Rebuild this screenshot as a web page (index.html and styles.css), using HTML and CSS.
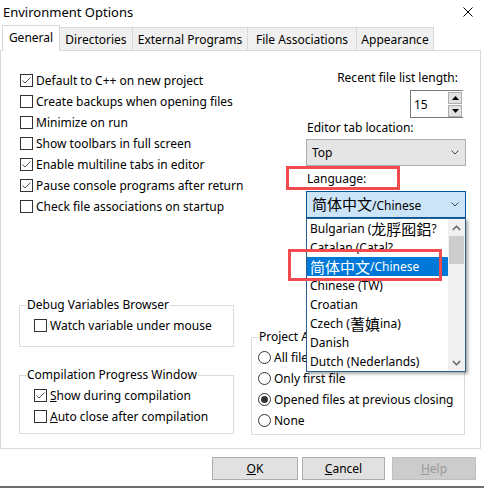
FILE: index.html
```html
<!DOCTYPE html>
<html>
<head>
<meta charset="utf-8">
<link rel="stylesheet" href="styles.css">
</head>
<body>
<div class="titlebar">
  <span class="title">Environment Options</span>
  <svg class="close" width="10" height="10" viewBox="0 0 10 10"><path d="M0.5 0.5 L9.5 9.5 M9.5 0.5 L0.5 9.5" stroke="#000" stroke-width="1" fill="none"/></svg>
</div>
<div class="tabs">
  <div class="tab active t-gen">General</div>
  <div class="tab t-dir">Directories</div>
  <div class="tab t-ext">External Programs</div>
  <div class="tab t-fa">File Associations</div>
  <div class="tab t-app">Appearance</div>
</div>
<div class="panel">
  <div class="top">
    <div class="checks">
      <div class="row"><span class="cb"><svg width="11" height="11" viewBox="0 0 11 11"><polyline points="1.5,5.5 4,8 9.5,2.5" fill="none" stroke="#555" stroke-width="1"/></svg></span>Default to C++ on new project</div>
      <div class="row"><span class="cb"></span>Create backups when opening files</div>
      <div class="row"><span class="cb"></span>Minimize on run</div>
      <div class="row"><span class="cb"></span>Show toolbars in full screen</div>
      <div class="row"><span class="cb"><svg width="11" height="11" viewBox="0 0 11 11"><polyline points="1.5,5.5 4,8 9.5,2.5" fill="none" stroke="#555" stroke-width="1"/></svg></span>Enable multiline tabs in editor</div>
      <div class="row"><span class="cb"><svg width="11" height="11" viewBox="0 0 11 11"><polyline points="1.5,5.5 4,8 9.5,2.5" fill="none" stroke="#555" stroke-width="1"/></svg></span>Pause console programs after return</div>
      <div class="row"><span class="cb"></span>Check file associations on startup</div>
    </div>
    <div class="right">
      <div class="lbl-r">Recent file list length:</div>
      <div class="spin">
        <span class="spin-val">15</span>
        <span class="spin-btns">
          <span class="sb"><svg width="7" height="4" viewBox="0 0 7 4"><polygon points="0,4 7,4 3.5,0" fill="#000"/></svg></span>
          <span class="sb"><svg width="7" height="4" viewBox="0 0 7 4"><polygon points="0,0 7,0 3.5,4" fill="#000"/></svg></span>
        </span>
      </div>
      <div class="lbl lbl-tab">Editor tab location:</div>
      <div class="combo">Top<svg width="8" height="5" viewBox="0 0 8 5"><polyline points="0.5,0.5 4,4 7.5,0.5" fill="none" stroke="#444" stroke-width="1"/></svg></div>
      <div class="lbl lbl-lang">Language:</div>
      <div class="combo combo-sel"><span><span class="cjk">简体中文</span>/Chinese</span><svg width="8" height="5" viewBox="0 0 8 5"><polyline points="0.5,0.5 4,4 7.5,0.5" fill="none" stroke="#444" stroke-width="1"/></svg></div>
    </div>
  </div>
  <div class="bottom">
    <div class="groups-left">
      <fieldset class="grp dbg">
        <legend>Debug Variables Browser</legend>
        <div class="row in"><span class="cb"></span>Watch variable under mouse</div>
      </fieldset>
      <fieldset class="grp comp">
        <legend>Compilation Progress Window</legend>
        <div class="row in"><span class="cb"><svg width="11" height="11" viewBox="0 0 11 11"><polyline points="1.5,5.5 4,8 9.5,2.5" fill="none" stroke="#555" stroke-width="1"/></svg></span><span><u>S</u>how during compilation</span></div>
        <div class="row in"><span class="cb"></span><span><u>A</u>uto close after compilation</span></div>
      </fieldset>
    </div>
    <fieldset class="grp proj">
      <legend>Project Auto Open</legend>
      <div class="row rin"><span class="rb"></span>All files</div>
      <div class="row rin"><span class="rb"></span>Only first file</div>
      <div class="row rin"><span class="rb on"><span class="dot"></span></span>Opened files at previous closing</div>
      <div class="row rin"><span class="rb"></span>None</div>
    </fieldset>
  </div>

  <div class="droplist">
    <div class="items">
      <div class="item">Bulgarian (<span class="cjk">龙脬囮鋁</span>?</div>
      <div class="item">Catalan (Catal?</div>
      <div class="item selected"><span class="cjk">简体中文</span>/Chinese</div>
      <div class="item">Chinese (TW)</div>
      <div class="item">Croatian</div>
      <div class="item">Czech (<span class="cjk">蓍嫃</span>ina)</div>
      <div class="item">Danish</div>
      <div class="item">Dutch (Nederlands)</div>
    </div>
    <div class="scrollbar">
      <div class="arrow"><svg width="9" height="6" viewBox="0 0 9 6"><polyline points="0.8,5 4.5,1.3 8.2,5" fill="none" stroke="#606060" stroke-width="1.5"/></svg></div>
      <div class="thumb"></div>
      <div class="track"></div>
      <div class="arrow"><svg width="9" height="6" viewBox="0 0 9 6"><polyline points="0.8,1 4.5,4.7 8.2,1" fill="none" stroke="#606060" stroke-width="1.5"/></svg></div>
    </div>
  </div>
  <div class="mark mark-lang"></div>
  <div class="mark mark-item"></div>
</div>
<div class="buttons">
  <button class="btn btn-ok"><u>O</u>K</button>
  <button class="btn btn-cancel"><u>C</u>ancel</button>
  <button class="btn btn-help" disabled><u>H</u>elp</button>
</div>
<div class="bottomline"></div>
</body>
</html>
```
FILE: styles.css
```css
* { box-sizing: border-box; }
html, body { margin: 0; padding: 0; }
body {
  width: 484px;
  height: 488px;
  overflow: hidden;
  background: #fff;
  font-family: "Noto Sans", "Noto Sans CJK SC", sans-serif;
  font-size: 12px;
  line-height: 17px;
  color: #000;
}
.cjk { font-family: "Noto Sans CJK SC", sans-serif; font-size: 15px; }

.titlebar {
  height: 25px;
  display: flex;
  align-items: center;
  justify-content: space-between;
  padding: 0 11px 1px 3px;
  font-size: 13px;
}

.tabs {
  display: flex;
  align-items: flex-end;
  height: 26px;
  padding-left: 2px;
  margin-bottom: -1px;
  position: relative;
  z-index: 2;
}
.tab {
  height: 23px;
  margin-bottom: 1px;
  margin-left: -1px;
  border: 1px solid #d9d9d9;
  border-bottom: none;
  background: #f0f0f0;
  display: flex;
  align-items: center;
  justify-content: center;
  white-space: nowrap;
}
.tab.active {
  height: 26px;
  margin-bottom: 0;
  margin-left: 0;
  background: #fff;
  position: relative;
  z-index: 3;
  padding-bottom: 2px;
}
.t-gen { width: 58px; }
.t-dir { width: 74px; }
.t-ext { width: 116px; }
.t-fa { width: 110px; }
.t-app { width: 78px; }

.panel {
  position: relative;
  z-index: 1;
  width: 481px;
  height: 399px;
  border: 1px solid #d9d9d9;
  padding-top: 18px;
  background: #fff;
}
.top { display: flex; }
.checks { width: 305px; padding-left: 19px; padding-top: 1px; }
.right { width: 160px; }

.row {
  display: flex;
  align-items: center;
  height: 21px;
  white-space: nowrap;
}
.cb {
  width: 13px;
  height: 13px;
  border: 1px solid #333;
  background: #fff;
  margin-right: 3px;
  flex: none;
  display: flex;
}
.rb {
  width: 13px;
  height: 13px;
  border: 1px solid #333;
  border-radius: 50%;
  background: #fff;
  margin-right: 3px;
  flex: none;
  display: flex;
  align-items: center;
  justify-content: center;
}
.rb .dot { width: 7px; height: 7px; border-radius: 50%; background: #333; }

.lbl-r { text-align: right; padding-right: 8px; }
.spin {
  margin: 4px 3px 0 auto;
  width: 53px;
  height: 28px;
  border: 1px solid #7a7a7a;
  border-right: none;
  display: flex;
  align-items: center;
  justify-content: space-between;
}
.spin-val { padding-left: 3px; }
.spin-btns { display: flex; flex-direction: column; gap: 1px; margin-right: 1px; }
.sb {
  width: 14px;
  height: 12px;
  background: #e1e1e1;
  border: 1px solid #adadad;
  display: flex;
  align-items: center;
  justify-content: center;
}
.lbl { padding-left: 1px; }
.lbl-tab { margin-top: 1px; }
.lbl-lang { margin-top: 4px; }
.combo {
  height: 27px;
  margin-top: 3px;
  border: 1px solid #adadad;
  background: #e5e5e5;
  display: flex;
  align-items: center;
  justify-content: space-between;
  padding: 0 6px 0 5px;
}
.combo-sel {
  margin-top: 4px;
  background: #cce4f7;
  border-color: #005499;
}

.bottom {
  display: flex;
  align-items: flex-start;
  margin-top: 79px;
  padding-left: 18px;
}
.groups-left { width: 215px; }
fieldset.grp {
  margin: 0;
  padding: 2px 0 0 0;
  border: 1px solid #dcdcdc;
  min-width: 0;
}
fieldset.grp legend {
  margin-left: 6px;
  padding: 0 1px;
  line-height: 16px;
}
.dbg { padding-bottom: 10px !important; }
.comp { margin-top: 20px !important; padding-bottom: 6px !important; }
.proj {
  width: 214px;
  margin-left: 17px !important;
  margin-top: 32px !important;
  padding-bottom: 3px !important;
}
.row.in { margin-left: 14px; }
.row.rin { margin-left: 6px; }

.droplist {
  position: absolute;
  left: 305px;
  top: 167px;
  width: 160px;
  height: 154px;
  border: 1px solid #2b5f8f;
  background: #fff;
  display: flex;
  box-shadow: 2px 2px 3px rgba(0,0,0,0.35);
  z-index: 5;
}
.items { flex: 1; }
.item {
  height: 19px;
  display: flex;
  align-items: center;
  padding-left: 3px;
  white-space: nowrap;
  overflow: hidden;
}
.item.selected { background: #0078d7; color: #fff; }
.scrollbar {
  width: 17px;
  background: #f0f0f0;
  display: flex;
  flex-direction: column;
}
.arrow { height: 17px; display: flex; align-items: center; justify-content: center; }
.thumb { height: 28px; margin: 0 1px; background: #cdcdcd; }
.track { flex: 1; }

.mark {
  position: absolute;
  border: 3px solid #f14b4f;
  z-index: 6;
}
.mark-lang { left: 285px; top: 115px; width: 114px; height: 24px; }
.mark-item { left: 287px; top: 198px; width: 154px; height: 32px; }

.buttons {
  display: flex;
  margin-top: 8px;
  padding-left: 212px;
}
.btn {
  height: 23px;
  margin: 0;
  padding: 0;
  font-family: "Noto Sans", sans-serif;
  font-size: 12px;
  color: #000;
  background: #e1e1e1;
  border: 1px solid #adadad;
}
.btn-ok { width: 86px; }
.btn-cancel { width: 83px; margin-left: 4px; }
.btn-help { width: 84px; margin-left: 7px; background: #cccccc; border-color: #bfbfbf; color: #9a9a9a; }
.bottomline { margin-top: 6px; height: 2px; background: #6e6e6e; }
```
